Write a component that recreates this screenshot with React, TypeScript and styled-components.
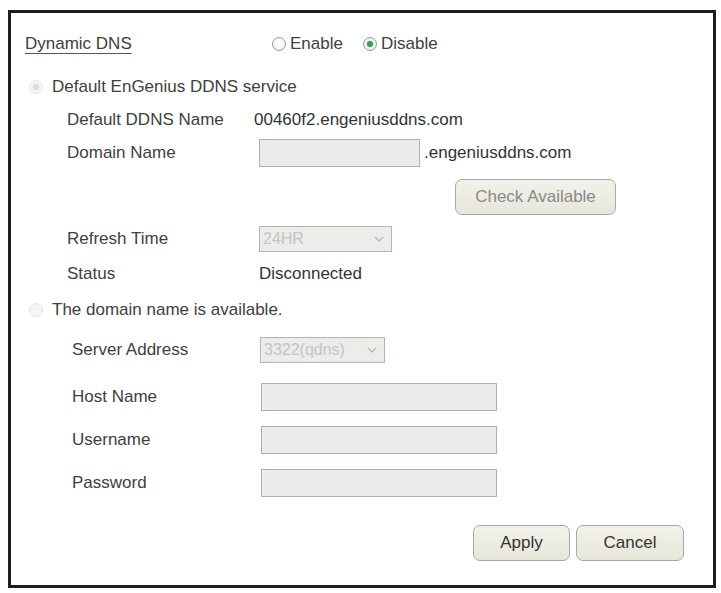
import { FC } from "react";
import styled, { createGlobalStyle } from "styled-components";

const GlobalStyle = createGlobalStyle`
  html, body {
    margin: 0;
    padding: 0;
    background: #ffffff;
  }
  body {
    font-family: "Liberation Sans", Arial, sans-serif;
    color: #3c3c3c;
  }
`;

const Frame = styled.div`
  box-sizing: border-box;
  margin: 10px 0 0 8px;
  width: 708px;
  height: 578px;
  border: 3px solid #1e1e1e;
  padding: 16px 29px 0 14px;
  display: flex;
  flex-direction: column;
`;

const Row = styled.div<{ $top: number; $height?: number; $indent?: number }>`
  display: flex;
  align-items: center;
  margin-top: ${(p) => p.$top}px;
  height: ${(p) => p.$height ?? 30}px;
  padding-left: ${(p) => p.$indent ?? 0}px;
  font-size: 17px;
  flex-shrink: 0;
`;

const Title = styled.span`
  width: 247px;
  text-decoration: underline;
  text-decoration-color: #5e4d6e;
  text-underline-offset: 4px;
  color: #404040;
`;

const RadioGroup = styled.div`
  display: flex;
  align-items: center;
  gap: 20px;
`;

const RadioLabel = styled.label<{ $gap?: number }>`
  display: flex;
  align-items: center;
  gap: ${(p) => p.$gap ?? 5}px;
  color: #404040;
`;

const Radio = styled.span<{ $checked?: boolean; $faded?: boolean }>`
  box-sizing: border-box;
  width: 14px;
  height: 14px;
  border-radius: 50%;
  border: 1px solid ${(p) => (p.$faded ? "#e2e4e6" : "#8e9aa4")};
  background: ${(p) => (p.$faded ? "#f6f6f6" : "radial-gradient(circle at 50% 40%, #ffffff, #e8ecef)")};
  display: inline-flex;
  align-items: center;
  justify-content: center;

  &::after {
    content: "";
    display: ${(p) => (p.$checked ? "block" : "none")};
    width: 6px;
    height: 6px;
    border-radius: 50%;
    background: ${(p) => (p.$faded ? "#d8dcd8" : "#3f9b5c")};
    box-shadow: 0 0 2px ${(p) => (p.$faded ? "#e6e6e6" : "#8fd1a0")};
  }
`;

const Label = styled.span<{ $width: number }>`
  width: ${(p) => p.$width}px;
  color: #404040;
  flex-shrink: 0;
`;

const Value = styled.span`
  color: #333333;
`;

const TextBox = styled.div<{ $width: number }>`
  box-sizing: border-box;
  width: ${(p) => p.$width}px;
  height: 28px;
  border: 1px solid #a9b2ba;
  background: #ebebe9;
`;

const Suffix = styled.span`
  margin-left: 4px;
  color: #333333;
`;

const SelectBox = styled.div<{ $width: number }>`
  box-sizing: border-box;
  width: ${(p) => p.$width}px;
  height: 26px;
  border: 1px solid #aeb6bd;
  background: #ecece9;
  display: flex;
  align-items: center;
  justify-content: space-between;
  padding: 0 6px 0 3px;
  color: #c4c4c4;
  font-size: 16px;
`;

const Chevron = styled.svg`
  width: 12px;
  height: 12px;
`;

const Button = styled.button<{ $width: number; $disabled?: boolean }>`
  box-sizing: border-box;
  width: ${(p) => p.$width}px;
  height: 36px;
  border: 1px solid #a8a8a2;
  border-radius: 7px;
  background: linear-gradient(#f3f2ea, #e7e6da);
  font-family: "Liberation Sans", Arial, sans-serif;
  font-size: 17px;
  color: ${(p) => (p.$disabled ? "#8a8a8a" : "#333333")};
  padding: 0;
`;

const ButtonRow = styled(Row)<{ $right?: number }>`
  justify-content: flex-end;
  gap: 6px;
  padding-right: ${(p) => p.$right ?? 0}px;
`;

const Select: FC<{ width: number; value: string }> = ({ width, value }) => (
  <SelectBox $width={width}>
    <span>{value}</span>
    <Chevron viewBox="0 0 12 12" fill="none">
      <path d="M2 4l4 4 4-4" stroke="#b8bcc0" strokeWidth="1.4" />
    </Chevron>
  </SelectBox>
);

const App: FC = () => (
  <>
    <GlobalStyle />
    <Frame>
      <Row $top={0}>
        <Title>Dynamic DNS</Title>
        <RadioGroup>
          <RadioLabel $gap={4}>
            <Radio />
            Enable
          </RadioLabel>
          <RadioLabel $gap={4}>
            <Radio $checked />
            Disable
          </RadioLabel>
        </RadioGroup>
      </Row>

      <Row $top={13} $indent={4}>
        <RadioLabel $gap={9}>
          <Radio $checked $faded />
          Default EnGenius DDNS service
        </RadioLabel>
      </Row>

      <Row $top={3} $indent={42}>
        <Label $width={187}>Default DDNS Name</Label>
        <Value>00460f2.engeniusddns.com</Value>
      </Row>

      <Row $top={3} $indent={42}>
        <Label $width={192}>Domain Name</Label>
        <TextBox $width={161} />
        <Suffix>.engeniusddns.com</Suffix>
      </Row>

      <ButtonRow $top={11} $height={36} $right={68}>
        <Button $width={161} $disabled>
          Check Available
        </Button>
      </ButtonRow>

      <Row $top={9} $indent={42}>
        <Label $width={192}>Refresh Time</Label>
        <Select width={133} value="24HR" />
      </Row>

      <Row $top={5} $indent={42}>
        <Label $width={192}>Status</Label>
        <Value>Disconnected</Value>
      </Row>

      <Row $top={6} $indent={4}>
        <RadioLabel $gap={9}>
          <Radio $faded />
          The domain name is available.
        </RadioLabel>
      </Row>

      <Row $top={10} $indent={47}>
        <Label $width={188}>Server Address</Label>
        <Select width={125} value="3322(qdns)" />
      </Row>

      <Row $top={17} $indent={47}>
        <Label $width={189}>Host Name</Label>
        <TextBox $width={236} />
      </Row>

      <Row $top={13} $indent={47}>
        <Label $width={189}>Username</Label>
        <TextBox $width={236} />
      </Row>

      <Row $top={13} $indent={47}>
        <Label $width={189}>Password</Label>
        <TextBox $width={236} />
      </Row>

      <ButtonRow $top={27} $height={36}>
        <Button $width={97}>Apply</Button>
        <Button $width={108}>Cancel</Button>
      </ButtonRow>
    </Frame>
  </>
);

export default App;
